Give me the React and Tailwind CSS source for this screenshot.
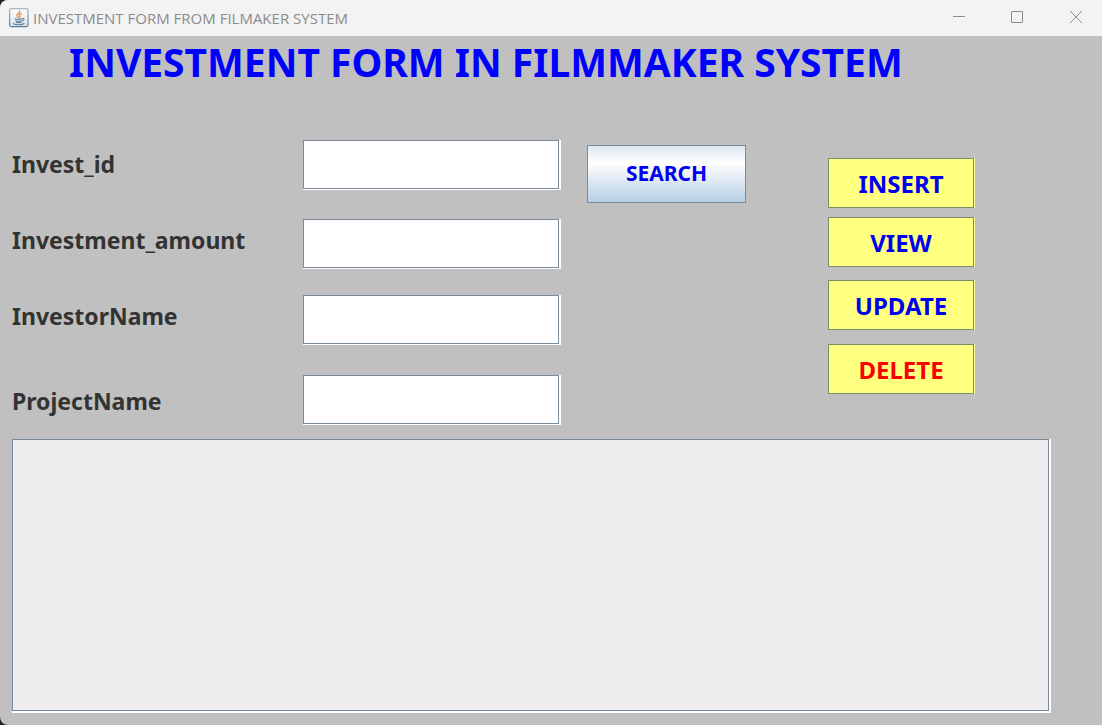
import React from "react";

const fields = [
  { id: "invest-id", label: "Invest_id", row: "pt-0", labelPos: "pb-0.5" },
  { id: "investment-amount", label: "Investment_amount", row: "pt-[29px]", labelPos: "pb-2" },
  { id: "investor-name", label: "InvestorName", row: "pt-[26px]", labelPos: "pb-2" },
  { id: "project-name", label: "ProjectName", row: "pt-[30px]", labelPos: "pt-0.5" },
];

const actions = [
  { name: "INSERT", style: "text-[#0000f0]" },
  { name: "VIEW", style: "mt-[9px] text-[#0000f0]" },
  { name: "UPDATE", style: "mt-[13px] text-[#0000f0]" },
  { name: "DELETE", style: "mt-3.5 text-[#fa0000]" },
];

function JavaIcon() {
  return (
    <svg className="h-5 w-5 shrink-0" viewBox="0 0 20 20" fill="none" aria-hidden="true">
      <defs>
        <linearGradient id="tile" x1="0" y1="0" x2="0" y2="1">
          <stop offset="0" stopColor="#fdfdfd" />
          <stop offset="1" stopColor="#dde3e8" />
        </linearGradient>
        <linearGradient id="edge" x1="0" y1="0" x2="0" y2="1">
          <stop offset="0" stopColor="#a9b6c1" />
          <stop offset="1" stopColor="#5b7a92" />
        </linearGradient>
      </defs>
      <rect x="0.6" y="0.6" width="18.4" height="18" rx="1.8" fill="url(#tile)" stroke="url(#edge)" strokeWidth="1.2" />
      <path d="M10.6 2.8C11.5 5 7.4 5.8 8 7.8c.2.8 1 1.2 1.3 2M12.4 5.6c-2.4 1-2.6 1.8-1.6 2.8.4.6.1 1.2-.5 1.7" stroke="#e98b45" strokeWidth="1.3" strokeLinecap="round" />
      <path d="M6 10.8c1.7.8 5 .8 7 0M6.7 12.8c1.6.7 4.2.7 5.7 0M7.2 14.3c1.4.6 3.3.6 4.7 0M13.3 10.8c2.4-.6 2.2 1.8-.2 2.4" stroke="#5c7f9b" strokeWidth="1.1" strokeLinecap="round" />
      <path d="M4.3 15.3c-.8 1.7 9 2 10.7.2" stroke="#5c7f9b" strokeWidth="1.1" strokeLinecap="round" />
    </svg>
  );
}

function TitleBar() {
  return (
    <header className="flex h-9 shrink-0 items-center bg-[#f3f3f3] pl-[9px] text-[#8b8b8b]">
      <JavaIcon />
      <span className="ml-1 grow font-['Open_Sans',sans-serif] text-[15px] leading-5">
        INVESTMENT FORM FROM FILMAKER SYSTEM
      </span>
      <div className="flex h-full pb-0.5">
        <button type="button" aria-label="Minimize" className="flex w-[58px] items-center justify-center">
          <svg className="h-3 w-3" viewBox="0 0 12 12" stroke="currentColor" fill="none"><path d="M0 5.5h12" /></svg>
        </button>
        <button type="button" aria-label="Maximize" className="flex w-[58px] items-center justify-center">
          <svg className="h-3 w-3" viewBox="0 0 12 12" stroke="currentColor" fill="none"><rect x=".5" y=".5" width="11" height="11" rx=".5" /></svg>
        </button>
        <button type="button" aria-label="Close" className="flex w-14 items-center justify-end pr-5">
          <svg className="h-3 w-3" viewBox="0 0 12 12" stroke="currentColor" fill="none"><path d="M0 0l12 12M12 0L0 12" /></svg>
        </button>
      </div>
    </header>
  );
}

export default function App() {
  return (
    <div className="min-h-screen bg-[#222222]">
      <div className="flex min-h-screen flex-col overflow-hidden rounded-l-lg bg-[#c0c0c0] font-['Noto_Sans',sans-serif]">
        <TitleBar />
        <main className="flex grow flex-col pl-3 pb-3">
          <h1 className="pl-[57px] pt-[3px] text-[39px] leading-[46px] font-bold text-[#0000ff]">
            INVESTMENT FORM IN FILMMAKER SYSTEM
          </h1>
          <form className="mt-[55px] grid grow grid-cols-[549fr_26fr_159fr_82fr_147fr_127fr] grid-rows-[auto_1fr]" onSubmit={(e) => e.preventDefault()}>
            <div>
              {fields.map((f) => (
                <div key={f.id} className={"grid grid-cols-[291fr_258fr] items-center " + f.row}>
                  <label htmlFor={f.id} className={"text-[23px] leading-8 font-bold text-[#333333] " + f.labelPos}>
                    {f.label}
                  </label>
                  <div className="bg-white pr-0.5 pb-px">
                    <input id={f.id} type="text" className="block h-[49px] w-full border border-[#7a8a99] bg-white px-2 text-xl outline-none" />
                  </div>
                </div>
              ))}
            </div>
            <button type="submit" className="col-start-3 mt-[5px] h-[58px] self-start border border-[#7a8a99] bg-linear-to-b from-[#dde8f3] via-white via-30% to-[#b8cfe5] text-[21px] font-bold text-[#0000f0]">
              SEARCH
            </button>
            <div className="col-start-5 flex flex-col pt-[18px]">
              {actions.map((a) => (
                <div key={a.name} className={"bg-[#ffffaa] pr-px " + a.style}>
                  <button type="button" className="block h-[50px] w-full border border-[#7f8c6c] bg-[#ffff80] pt-0.5 text-2xl leading-8 font-bold">
                    {a.name}
                  </button>
                </div>
              ))}
            </div>
            <div className="col-span-6 mt-3.5 mr-[51px] flex bg-white pr-0.5 pb-0.5">
              <textarea aria-label="Investment records" readOnly className="block w-full resize-none border border-[#7a8a99] bg-[#eeeeee] p-2 outline-none" />
            </div>
          </form>
        </main>
      </div>
    </div>
  );
}
